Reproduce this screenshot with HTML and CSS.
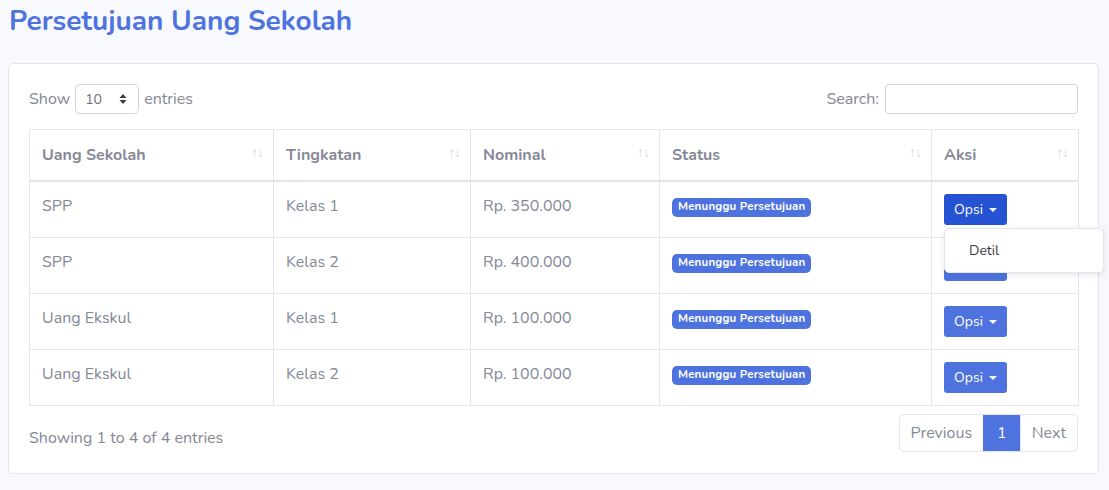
FILE: index.html
```html
<!DOCTYPE html>
<html lang="id">
<head>
<meta charset="utf-8">
<title>Persetujuan Uang Sekolah</title>
<link rel="stylesheet" href="styles.css">
</head>
<body>
<div class="page">
  <h1 class="title">Persetujuan Uang Sekolah</h1>
  <div class="card">
    <div class="toolbar">
      <label class="length">Show
        <span class="select">10
          <svg class="caret2" width="8" height="12" viewBox="0 0 8 12"><path d="M4 1 L7.5 5 H0.5 Z M4 11 L7.5 7 H0.5 Z" fill="#3a3b45"/></svg>
        </span>
        entries</label>
      <label class="search">Search: <span class="input"></span></label>
    </div>
    <table class="table">
      <colgroup>
        <col class="c1"><col class="c2"><col class="c3"><col class="c4"><col class="c5">
      </colgroup>
      <thead>
        <tr>
          <th><div class="th">Uang Sekolah<span class="sort"><span>↑</span><span>↓</span></span></div></th>
          <th><div class="th">Tingkatan<span class="sort"><span>↑</span><span>↓</span></span></div></th>
          <th><div class="th">Nominal<span class="sort"><span>↑</span><span>↓</span></span></div></th>
          <th><div class="th">Status<span class="sort"><span>↑</span><span>↓</span></span></div></th>
          <th><div class="th">Aksi<span class="sort"><span>↑</span><span>↓</span></span></div></th>
        </tr>
      </thead>
      <tbody>
        <tr>
          <td>SPP</td><td>Kelas 1</td><td>Rp. 350.000</td>
          <td><span class="badge">Menunggu Persetujuan</span></td>
          <td class="act">
            <span class="btn active">Opsi <i class="caret"></i></span>
            <div class="menu"><span class="item">Detil</span></div>
          </td>
        </tr>
        <tr>
          <td>SPP</td><td>Kelas 2</td><td>Rp. 400.000</td>
          <td><span class="badge">Menunggu Persetujuan</span></td>
          <td class="act"><span class="btn">Opsi <i class="caret"></i></span></td>
        </tr>
        <tr>
          <td>Uang Ekskul</td><td>Kelas 1</td><td>Rp. 100.000</td>
          <td><span class="badge">Menunggu Persetujuan</span></td>
          <td class="act"><span class="btn">Opsi <i class="caret"></i></span></td>
        </tr>
        <tr>
          <td>Uang Ekskul</td><td>Kelas 2</td><td>Rp. 100.000</td>
          <td><span class="badge">Menunggu Persetujuan</span></td>
          <td class="act"><span class="btn">Opsi <i class="caret"></i></span></td>
        </tr>
      </tbody>
    </table>
    <div class="footer">
      <div class="info">Showing 1 to 4 of 4 entries</div>
      <div class="pager">
        <span class="pg">Previous</span>
        <span class="pg cur">1</span>
        <span class="pg">Next</span>
      </div>
    </div>
  </div>
</div>
</body>
</html>
```
FILE: styles.css
```css
* { box-sizing: border-box; }
html, body { margin: 0; padding: 0; }
body {
  background: #f8f9fc;
  font-family: "Nunito", "Noto Sans", "Open Sans", sans-serif;
  color: #858796;
  font-size: 16px;
  line-height: 1.5;
}
.page { padding: 0 10px 0 8px; }
.title {
  margin: 0;
  padding: 2px 0 0 1px;
  height: 63px;
  font-size: 28px;
  font-weight: 700;
  color: #4e73df;
  line-height: 38px;
}
.card {
  background: #fff;
  border: 1px solid #e3e6f0;
  border-radius: 5px;
  padding: 20px 20px 21px;
  width: 1091px;
}
.toolbar {
  display: flex;
  justify-content: space-between;
  align-items: center;
  height: 30px;
  font-size: 16px;
}
.length, .search { display: flex; align-items: center; gap: 5px; }
.search { gap: 6px; }
.select {
  display: inline-flex;
  align-items: center;
  justify-content: space-between;
  width: 64px;
  height: 30px;
  border: 1px solid #d1d3e2;
  border-radius: 5px;
  padding: 0 11px 0 9px;
  color: #6e707e;
  font-size: 14px;
}
.input {
  display: inline-block;
  width: 193px;
  height: 30px;
  border: 1px solid #d1d3e2;
  border-radius: 4px;
}
.table {
  margin-top: 15px;
  width: 1049px;
  border-collapse: collapse;
  table-layout: fixed;
}
.c1 { width: 244px; } .c2 { width: 197px; } .c3 { width: 189px; } .c4 { width: 272px; } .c5 { width: 147px; }
.table th, .table td {
  border: 1px solid #e3e6f0;
  padding: 12px 12px;
  text-align: left;
  vertical-align: top;
  font-size: 16px;
  line-height: 24px;
}
.table th { border-bottom: 2px solid #e3e6f0; font-weight: 700; padding: 13px 10px 13px 12px; }
.th { display: flex; justify-content: space-between; align-items: center; }
.sort { display: flex; font-size: 14px; color: #d6d7de; font-weight: 400; letter-spacing: -1px; margin-top: -4px; }
.table td { height: 56px; }
.badge {
  display: inline-block;
  background: #4e73df;
  color: #fff;
  font-size: 11.5px;
  font-weight: 700;
  letter-spacing: 0.2px;
  line-height: 1;
  padding: 3px 6px 4px 6px;
  border-radius: 5px;
  position: relative;
  top: -1px;
}
.act { position: relative; }
.btn {
  display: inline-flex;
  align-items: center;
  gap: 6px;
  height: 31px;
  padding: 0 10px;
  background: #4e73df;
  color: #fff;
  font-size: 14px;
  border-radius: 3px;
}
.btn.active { background: #2653d4; }
.caret {
  display: inline-block;
  width: 0; height: 0;
  border-left: 4px solid transparent;
  border-right: 4px solid transparent;
  border-top: 4px solid #fff;
}
.menu {
  position: absolute;
  left: 12px;
  top: 46px;
  width: 160px;
  height: 45px;
  background: #fff;
  border: 1px solid #e3e6f0;
  border-radius: 5px;
  box-shadow: 0 2px 6px rgba(58,59,69,.12);
  padding: 8px 0;
  z-index: 2;
}
.item { display: block; padding: 4px 24px; color: #3a3b45; font-size: 14px; line-height: 20px; }
.footer {
  display: flex;
  justify-content: space-between;
  align-items: flex-start;
  margin-top: 8px;
}
.info { padding-top: 12px; font-size: 16px; }
.pager { display: flex; border: 1px solid #e3e6f0; border-radius: 5px; overflow: hidden; height: 38px; }
.pg { display: flex; align-items: center; padding: 0 11px; font-size: 16px; color: #858796; }
.pg + .pg { border-left: 1px solid #e3e6f0; }
.pg.cur { background: #4e73df; color: #fff; border-color: #4e73df; padding: 0 13px; }
```
